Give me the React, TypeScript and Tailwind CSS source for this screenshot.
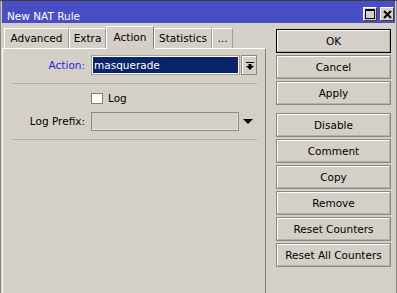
import React from "react";

type Tab = { name: string; w: string; active?: boolean };

const tabs: Tab[] = [
  { name: "Advanced", w: "w-[65px]" },
  { name: "Extra", w: "w-[37px]" },
  { name: "Action", w: "w-[48px]", active: true },
  { name: "Statistics", w: "w-[58px]" },
  { name: "...", w: "w-[21px]" },
];

const buttons = ["Disable", "Comment", "Copy", "Remove", "Reset Counters", "Reset All Counters"];

const WinButton: React.FC<{ label: string; isDefault?: boolean }> = ({ label, isDefault }) => (
  <div
    className={
      isDefault
        ? "h-[24px] w-[115px] border border-black bg-[#d4d0c8]"
        : "h-[24px] w-[115px] border border-[#8a8883] bg-[#d4d0c8]"
    }
  >
    <div className="h-full w-full border-t border-l border-white border-b border-r border-b-[#b4b0a8] border-r-[#b4b0a8] flex items-center justify-center text-black">
      {label}
    </div>
  </div>
);

const App: React.FC = () => {
  return (
    <div
      className="w-[397px] h-[293px] overflow-hidden bg-[#d4d0c8] border-t border-x border-t-[#3c3c3c] border-x-[#8a8883] px-[1px] flex flex-col text-[10.5px] leading-none"
      style={{ fontFamily: '"DejaVu Sans", Verdana, sans-serif' }}
    >
      {/* title bar */}
      <div className="h-[22px] bg-[#4a4ec6] flex items-start shrink-0">
        <span className="text-white pl-[5px] pt-[10px]">New NAT Rule</span>
        <div className="ml-auto flex gap-[3px] mt-[6px] mr-[1px]">
          <div className="w-[14px] h-[14px] bg-[#d4d0c8] border border-t-white border-l-white border-b-[#404040] border-r-[#404040] flex items-center justify-center">
            <svg width="10" height="10" viewBox="0 0 10 10">
              <rect x="0.5" y="0.5" width="9" height="9" fill="none" stroke="#000" />
              <rect x="0" y="0" width="10" height="2" fill="#000" />
            </svg>
          </div>
          <div className="w-[14px] h-[14px] bg-[#d4d0c8] border border-t-white border-l-white border-b-[#404040] border-r-[#404040] flex items-center justify-center">
            <svg width="9" height="9" viewBox="0 0 9 9">
              <path d="M1 1 L8 8 M8 1 L1 8" stroke="#000" strokeWidth="2" />
            </svg>
          </div>
        </div>
      </div>

      <div className="flex flex-1 pt-[3px]">
        {/* left: tabs + panel */}
        <div className="w-[264px] flex flex-col">
          <div className="h-[22px] flex items-end pl-[2px]">
            {tabs.map((t) =>
              t.active ? (
                <div
                  key={t.name}
                  className={`${t.w} h-[23px] -mb-px relative bg-[#d4d0c8] border-t border-l border-r border-t-white border-l-white border-r-[#808080] flex items-center justify-center pb-[2px] text-black`}
                >
                  {t.name}
                </div>
              ) : (
                <div
                  key={t.name}
                  className={`${t.w} h-[20px] bg-[#d4d0c8] border-t border-l border-r border-t-white border-l-white border-r-[#a09c94] flex items-center justify-center text-black`}
                >
                  {t.name}
                </div>
              )
            )}
          </div>

          <div className="flex-1 border-t border-l border-r border-t-white border-l-white border-r-[#808080] pt-[6px]">
            {/* Action row */}
            <div className="flex items-center h-[20px]">
              <div className="w-[82px] text-right text-[#1f1fe8]">Action:</div>
              <div className="ml-[6px] w-[149px] h-[20px] border border-[#a8a49c]">
                <div className="w-full h-full border border-white bg-[#0a246a] text-white flex items-center pl-[1px]">
                  masquerade
                </div>
              </div>
              <div className="ml-[1px] w-[16px] h-[20px] border border-[#8a8883]">
                <div className="w-full h-full border-t border-l border-white flex items-center justify-center">
                  <svg width="8" height="8" viewBox="0 0 8 8">
                    <rect x="0" y="0" width="8" height="1" fill="#000" />
                    <rect x="2.5" y="2" width="3" height="2" fill="#000" />
                    <polygon points="0,4 8,4 4,8" fill="#000" />
                  </svg>
                </div>
              </div>
            </div>

            <div className="mt-[8px] ml-[9px] w-[245px] h-px bg-[#b3afa7]" />

            {/* Log checkbox */}
            <div className="mt-[9px] flex items-center h-[11px]">
              <div className="ml-[88px] w-[12px] h-[11px] bg-white border border-[#808080]" />
              <span className="ml-[5px] text-black">Log</span>
            </div>

            {/* Log prefix */}
            <div className="mt-[8px] flex items-center h-[19px]">
              <div className="w-[82px] text-right text-black">Log Prefix:</div>
              <div className="ml-[6px] w-[148px] h-[19px] border border-[#8e8a84]">
                <div className="w-full h-full border-b border-r border-[#e6e3de]" />
              </div>
              <svg className="ml-[4px]" width="10" height="5" viewBox="0 0 10 5">
                <polygon points="0,0 10,0 5,5" fill="#000" />
              </svg>
            </div>

            <div className="mt-[8px] ml-[9px] w-[245px] h-px bg-[#b3afa7]" />
          </div>
        </div>

        {/* right: buttons */}
        <div className="ml-[10px] mt-[3px] flex flex-col gap-[2px]">
          <WinButton label="OK" isDefault />
          <WinButton label="Cancel" />
          <WinButton label="Apply" />
          <div className="h-[4px]" />
          {buttons.map((b) => (
            <WinButton key={b} label={b} />
          ))}
        </div>
      </div>
    </div>
  );
};

export default App;
